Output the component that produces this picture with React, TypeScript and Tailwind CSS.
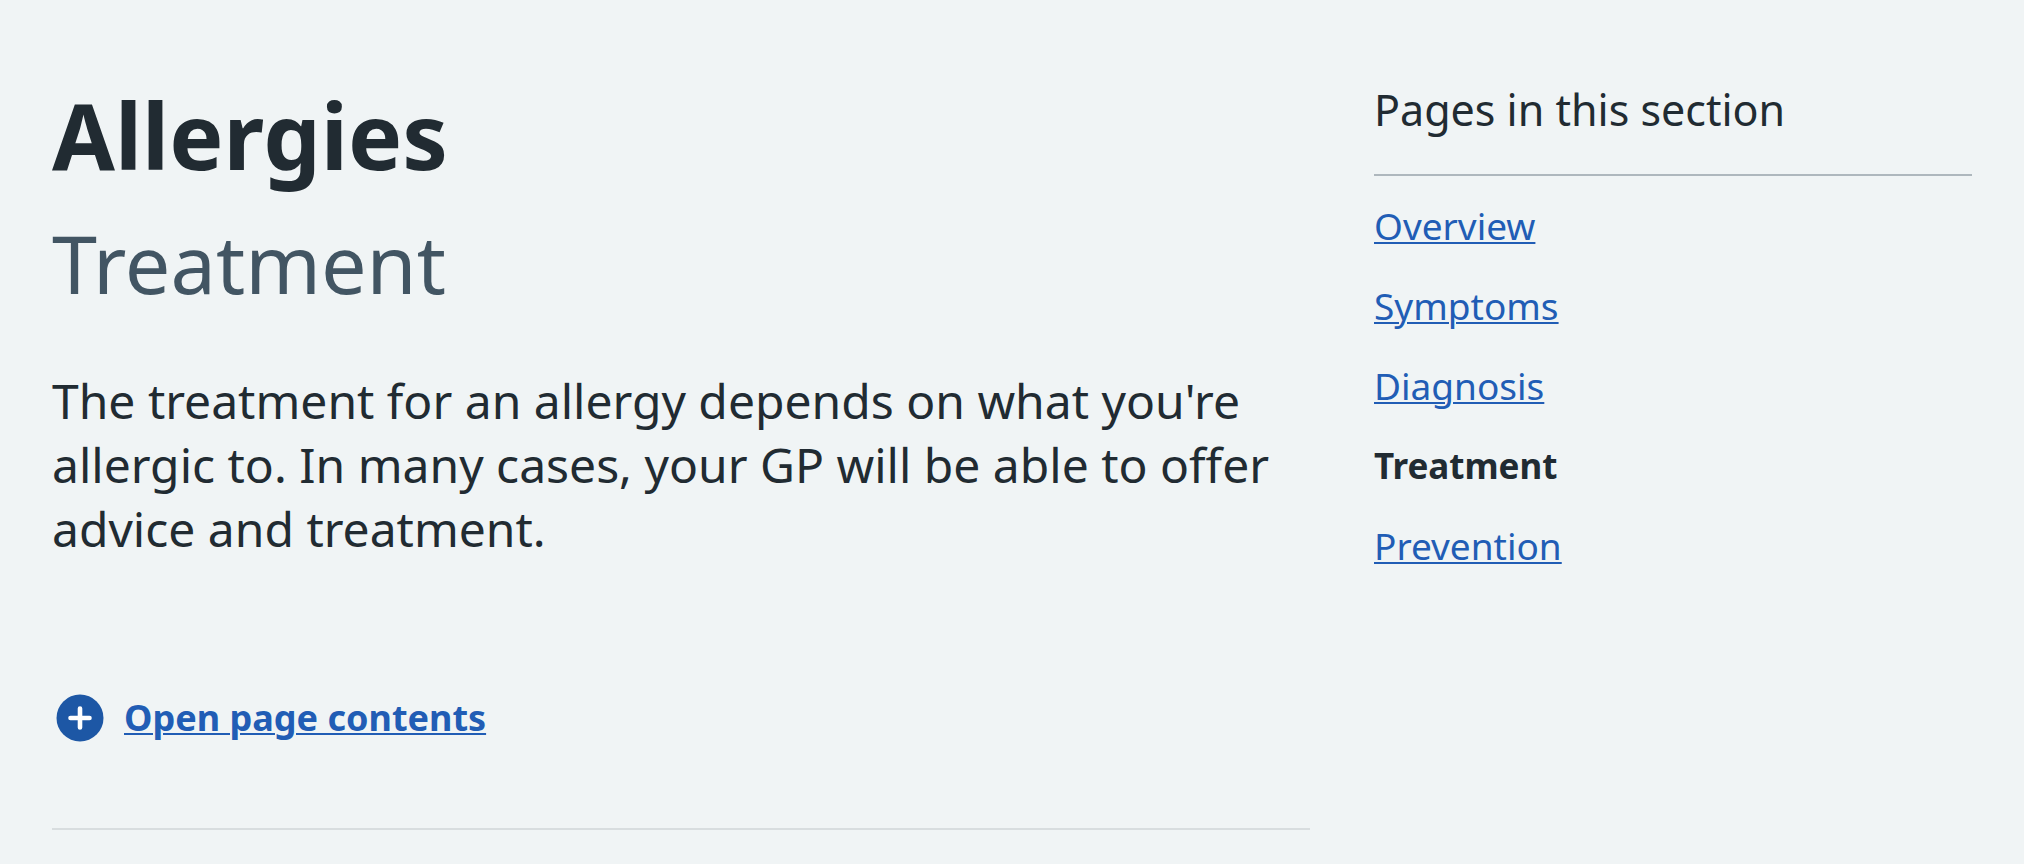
import React from "react";

const pages = ["Overview", "Symptoms", "Diagnosis", "Treatment", "Prevention"];

export default function App() {
  return (
    <div className="flex min-h-screen items-start gap-16 bg-[#f0f4f5] px-[52px] pt-20 font-['Noto_Sans',sans-serif] text-[#212b32]">
      <main className="flex-[1258] border-b-2 border-[#d8dddf] pb-[82px]">
        <h1 className="text-[91px] leading-[110px] font-bold">
          Allergies
          <span className="block text-[81px] leading-[146px] font-normal text-[#425563]">Treatment</span>
        </h1>
        <p className="mt-[33px] text-[48px] leading-16">
          The treatment for an allergy depends on what you're allergic to. In many cases, your GP will be able to offer advice and treatment.
        </p>
        <button
          type="button"
          className="mt-[129px] flex cursor-pointer items-center gap-5 text-[36px] leading-[56px] font-bold text-[#215db5]"
        >
          <svg viewBox="0 0 48 48" className="ml-1 size-12" aria-hidden="true">
            <circle cx="24" cy="24" r="23.5" fill="#1d57a5" />
            <path d="M24 14.5v19M14.5 24h19" stroke="#fff" strokeWidth="4.6" strokeLinecap="round" />
          </svg>
          <span className="underline decoration-2 underline-offset-2">Open page contents</span>
        </button>
      </main>
      <nav aria-labelledby="section-pages" className="flex-[598]">
        <h2 id="section-pages" className="border-b-2 border-[#aeb7bd] pb-[34px] text-[43px] leading-[60px]">
          Pages in this section
        </h2>
        <ul className="mt-[22px] flex flex-col gap-6 text-[37px] leading-[56px]">
          {pages.map((page) => (
            <li key={page} className="flex">
              {page === "Treatment" ? (
                <strong className="text-[35px]">{page}</strong>
              ) : (
                <a href="#" className="text-[#215db5] underline decoration-2 underline-offset-2">
                  {page}
                </a>
              )}
            </li>
          ))}
        </ul>
      </nav>
    </div>
  );
}
